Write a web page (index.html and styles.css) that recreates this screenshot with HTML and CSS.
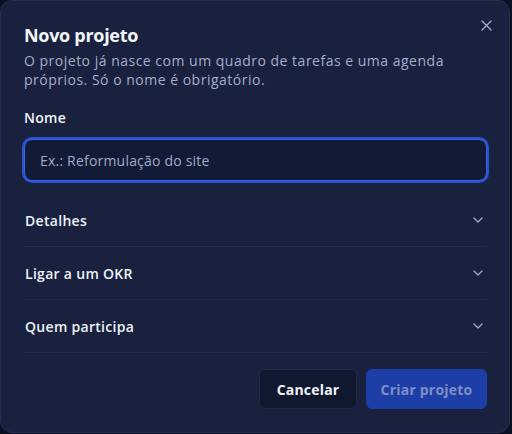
FILE: index.html
```html
<!DOCTYPE html>
<html lang="pt">
<head>
<meta charset="utf-8">
<link rel="stylesheet" href="styles.css">
</head>
<body>
<div class="dialog">
  <button class="close" aria-label="Fechar">
    <svg width="11" height="11" viewBox="0 0 11 11"><path d="M1 1L10 10M10 1L1 10" stroke="#a3aac8" stroke-width="1.4" stroke-linecap="round"/></svg>
  </button>
  <h1 class="title">Novo projeto</h1>
  <p class="desc">O projeto já nasce com um quadro de tarefas e uma agenda próprios. Só o nome é obrigatório.</p>
  <label class="label">Nome</label>
  <div class="input"><span class="placeholder">Ex.: Reformulação do site</span></div>
  <div class="sections">
    <div class="row"><span>Detalhes</span><svg class="chev" width="10" height="6" viewBox="0 0 10 6"><path d="M1 1L5 5L9 1" stroke="#a3aac8" stroke-width="1.3" fill="none" stroke-linecap="round" stroke-linejoin="round"/></svg></div>
    <div class="row"><span>Ligar a um OKR</span><svg class="chev" width="10" height="6" viewBox="0 0 10 6"><path d="M1 1L5 5L9 1" stroke="#a3aac8" stroke-width="1.3" fill="none" stroke-linecap="round" stroke-linejoin="round"/></svg></div>
    <div class="row"><span>Quem participa</span><svg class="chev" width="10" height="6" viewBox="0 0 10 6"><path d="M1 1L5 5L9 1" stroke="#a3aac8" stroke-width="1.3" fill="none" stroke-linecap="round" stroke-linejoin="round"/></svg></div>
  </div>
  <div class="actions">
    <button class="btn cancel">Cancelar</button>
    <button class="btn primary">Criar projeto</button>
  </div>
</div>
</body>
</html>
```
FILE: styles.css
```css
* { box-sizing: border-box; }
html, body { margin: 0; padding: 0; }
body {
  width: 512px;
  height: 434px;
  background: #0b1022;
  font-family: "Open Sans", "DejaVu Sans", sans-serif;
  overflow: hidden;
}
.dialog {
  position: relative;
  width: 510px;
  height: 433px;
  background: #19213f;
  border: 1px solid #252e50;
  border-radius: 12px;
  padding: 21px 22px 0 23px;
}
.close {
  position: absolute;
  top: 19px;
  right: 17px;
  background: none;
  border: 0;
  padding: 0;
  width: 11px;
  height: 11px;
  display: flex;
}
.title {
  margin: 0;
  font-size: 18px;
  line-height: 26px;
  font-weight: 700;
  color: #f3f5fb;
  letter-spacing: -0.3px;
}
.desc {
  margin: 3px 0 0;
  font-size: 14px;
  line-height: 19px;
  color: #a6adca;
  letter-spacing: 0.5px;
  padding-right: 20px;
}
.label {
  display: block;
  margin-top: 19px;
  font-size: 14px;
  line-height: 20px;
  font-weight: 600;
  color: #f1f3fa;
  letter-spacing: 0.3px;
}
.input {
  margin-top: 11px;
  height: 42px;
  border: 1px solid #3a66e6;
  box-shadow: 0 0 0 2px #2853cc;
  border-radius: 8px;
  background: #121a36;
  padding: 0 14px 0 15px;
  display: flex;
  align-items: center;
  font-size: 14px;
  color: #a3aac6;
}
.placeholder {
  display: block;
  letter-spacing: 0.2px;
}
.sections {
  margin-top: 13px;
}
.row {
  display: flex;
  justify-content: space-between;
  align-items: center;
  height: 53px;
  border-bottom: 1px solid #222b4c;
  font-size: 14px;
  font-weight: 600;
  color: #eef1f9;
  letter-spacing: 0.3px;
  padding: 0 4px 0 1px;
}
.chev { display: block; }
.actions {
  display: flex;
  justify-content: flex-end;
  gap: 9px;
  margin-top: 16px;
}
.btn {
  height: 40px;
  border-radius: 6px;
  font-family: inherit;
  font-size: 14px;
  font-weight: 700;
  letter-spacing: 0.2px;
  padding: 0;
  white-space: nowrap;
}
.cancel {
  width: 98px;
  background: #10172f;
  border: 1px solid #1f2847;
  color: #f1f3fa;
}
.primary {
  width: 121px;
  background: #1d3ea6;
  border: 1px solid #1d3ea6;
  color: #7f8fc6;
}
```
